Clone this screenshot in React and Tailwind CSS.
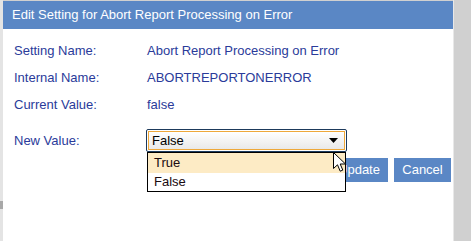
const rows = [
  ['Setting Name:', 'Abort Report Processing on Error'],
  ['Internal Name:', 'ABORTREPORTONERROR'],
  ['Current Value:', 'false'],
];

function Cursor() {
  return (
    <svg width="14" height="21" viewBox="0 0 14 21" className="absolute left-[187px] top-[23px] z-20">
      <path
        d="M0.5 0.5 L0.5 16.5 L4.5 12.8 L7.2 19.2 L9.8 18.1 L7.2 12 L12.5 12 Z"
        fill="#fff"
        stroke="#000"
        strokeWidth="1"
        strokeLinejoin="miter"
      />
    </svg>
  );
}

export default function App() {
  return (
    <div
      className="flex w-[471px] h-[241px] bg-[#d0d0d0] overflow-hidden"
      style={{ fontFamily: '"Liberation Sans", Arial, sans-serif' }}
    >
      <div className="w-[3px] flex flex-col bg-[#e4e4e4]">
        <div className="h-[201px]" />
        <div className="h-[8px] bg-[#a8a8a8]" />
      </div>

      <div className="w-[450px] mt-px flex flex-col bg-white">
        <div className="h-[28px] flex items-center pl-[9px] bg-[#5a87c5] text-white text-[13px]">
          Edit Setting for Abort Report Processing on Error
        </div>

        <div className="flex flex-col pl-[11px] pt-[8px] text-[13px] text-[#2a3b9a]">
          {rows.map(([label, value]) => (
            <div key={label} className="flex h-[27px] items-center">
              <div className="w-[133px]">{label}</div>
              <div>{value}</div>
            </div>
          ))}

          <div className="flex items-center mt-[9px] h-[27px]">
            <div className="w-[132px]">New Value:</div>
            <div className="relative">
              <div className="w-[201px] h-[23px] rounded-[2px] border border-[#1d3a5c] p-px bg-white">
                <div className="h-full flex items-center justify-between pl-[3px] pr-[6px] border border-[#eea83a] bg-gradient-to-b from-white to-[#e9e9e9] text-black">
                  <span>False</span>
                  <svg width="9" height="5" viewBox="0 0 9 5">
                    <path d="M0 0 H9 L4.5 5 Z" fill="#000" />
                  </svg>
                </div>
              </div>

              <div className="absolute left-px top-[23px] w-[199px] border border-black bg-white text-[#1a0a10] z-10">
                <div className="h-[20px] flex items-center pl-[6px] bg-[#fdebc5]">True</div>
                <div className="h-[18px] flex items-center pl-[6px]">False</div>
              </div>

              <Cursor />
            </div>
          </div>

          <div className="flex justify-end gap-[6px] pr-[2px] mt-[4px]">
            <button className="h-[24px] w-[58px] bg-[#5a87c5] text-white text-[13px] flex items-center justify-center">
              Update
            </button>
            <button className="h-[24px] w-[57px] bg-[#5a87c5] text-white text-[13px] flex items-center justify-center">
              Cancel
            </button>
          </div>
        </div>
      </div>

      <div className="w-px bg-[#e8e8e8]" />
      <div className="flex-1" />
    </div>
  );
}
